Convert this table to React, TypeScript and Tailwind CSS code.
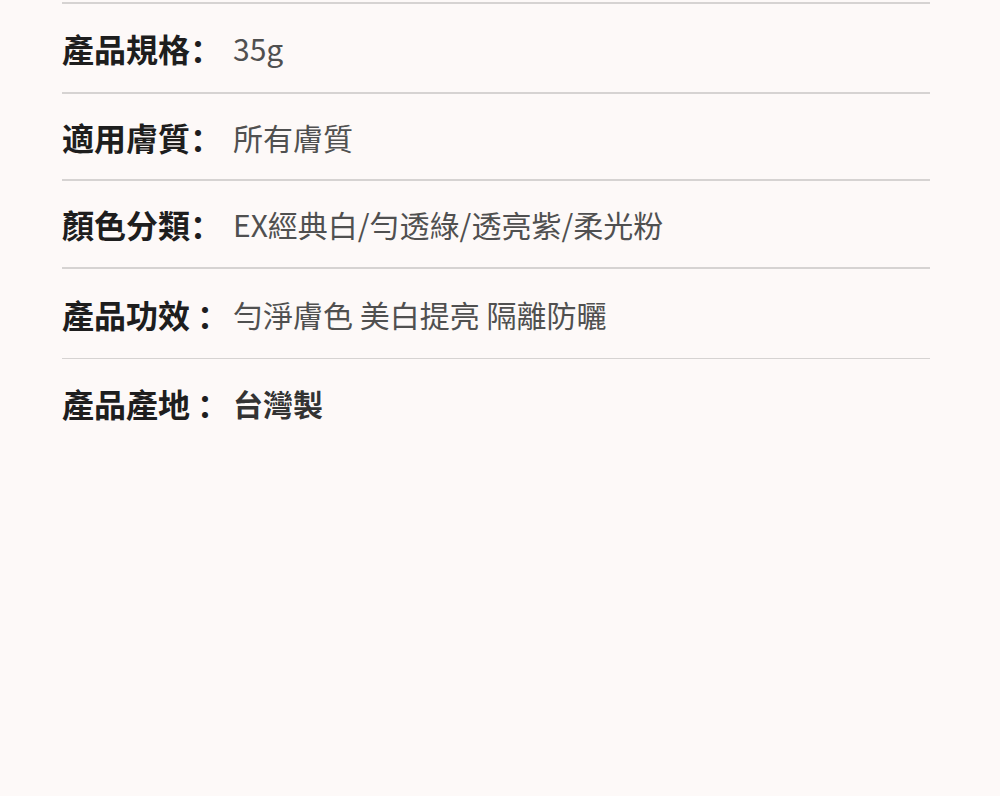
import React from "react"

interface SpecRow {
    label: string
    value: string
    height: string
    spaced?: boolean
    bold?: boolean
}

const rows: SpecRow[] = [
    { label: "產品規格", value: "35g", height: "h-[90px]" },
    { label: "適用膚質", value: "所有膚質", height: "h-[87px]" },
    { label: "顏色分類", value: "EX經典白/勻透綠/透亮紫/柔光粉", height: "h-[88px]" },
    { label: "產品功效", value: "勻淨膚色 美白提亮 隔離防曬", height: "h-[91px]", spaced: true },
    { label: "產品產地", value: "台灣製", height: "h-[88px]", spaced: true, bold: true },
]

const App: React.FC = () => {
    return (
        <div className="min-h-[796px] w-full bg-[#fdf9f8] pt-[2px] font-['Noto_Sans_CJK_SC','Noto_Sans_CJK_TC',sans-serif]">
            <div className="ml-[62px] w-[868px]">
                {rows.map((row, i) => (
                    <div
                        key={row.label}
                        className={`flex items-center ${row.height} ${i < 4 ? "border-t-2 border-[#d6d3d2]" : "border-t border-[#d6d3d2]"}`}
                    >
                        <div className="w-[171px] shrink-0 text-[32px] font-bold leading-none text-[#1e1e1e]">
                            {row.label}
                            <span className={row.spaced ? "ml-[7px]" : ""}>：</span>
                        </div>
                        <div
                            className={`text-[30px] leading-none ${row.bold ? "font-bold text-[#333]" : "text-[#505050]"}`}
                        >
                            {row.value}
                        </div>
                    </div>
                ))}
            </div>
        </div>
    )
}

export default App
